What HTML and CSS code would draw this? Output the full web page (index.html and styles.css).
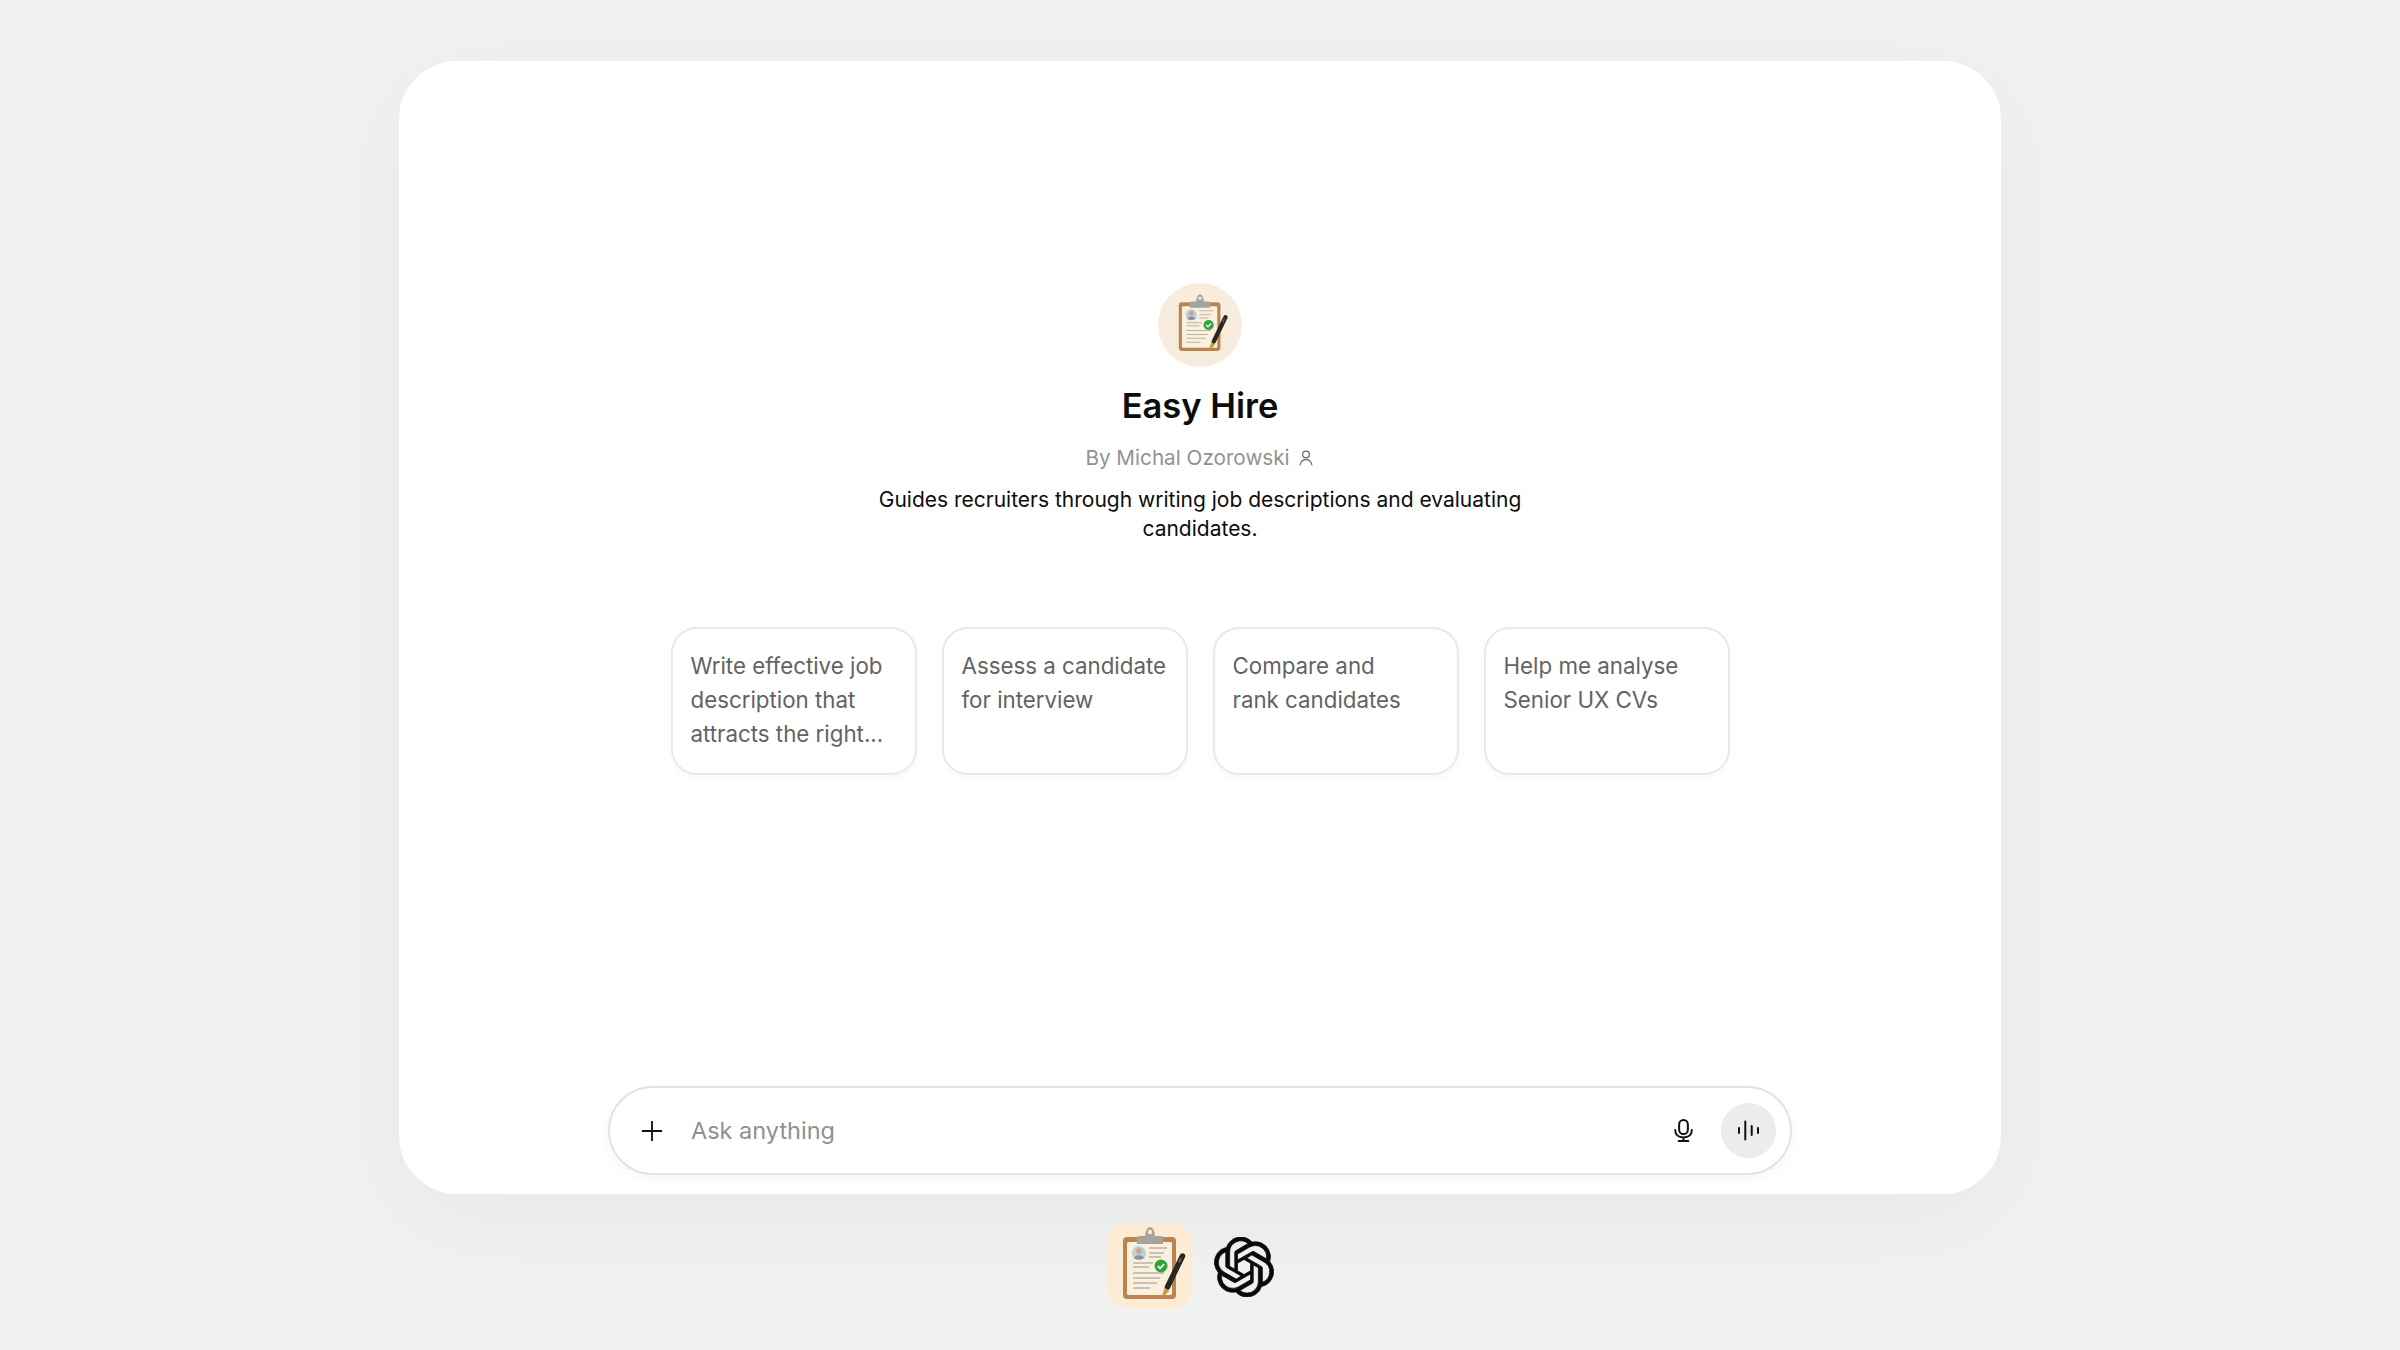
FILE: index.html
```html
<!DOCTYPE html>
<html lang="en">
<head>
    <meta charset="UTF-8">
    <title>Easy Hire</title>
    <link rel="stylesheet" href="styles.css">
</head>
<body>
<svg class="defs" width="0" height="0">
    <defs>
        <symbol id="clipboard" viewBox="0 0 84 84">
            <rect x="15" y="13" width="53" height="62" rx="4" fill="#bb8350"/>
            <rect x="19" y="18" width="45" height="53" rx="1.500" fill="#f9f0e0"/>
            <path d="M29 20v-6q0-2 2-2h6q1-9 5-9t5 9h6q2 0 2 2v6z" fill="#a8a297"/>
            <circle cx="42" cy="8" r="2.2" fill="#f3eadb"/>
            <circle cx="31" cy="29" r="7" fill="#b9d0d6"/>
            <circle cx="31" cy="27" r="2.8" fill="#cfa283"/>
            <path d="M25.5 34q5.500-6 11 0q-5.500 3.500-11 0z" fill="#8a9599"/>
            <path d="M41 24h18M41 29h15M41 33h12M25 39h20M25 43h16M25 49h31M25 54h27M25 59h24M25 64h17" stroke="#bcb3a2" stroke-width="1.300" fill="none"/>
            <circle cx="53" cy="42" r="6.500" fill="#35a33c"/>
            <path d="M49.800 42l2.300 2.300 4-4.300" stroke="#fff" stroke-width="1.600" fill="none"/>
            <path d="M74.500 32l-15 31" stroke="#2c2623" stroke-width="5.500" stroke-linecap="round"/>
            <path d="M57 65l-2.500 7.500 5.500-5.500z" fill="#c79a3f" stroke="#c79a3f" stroke-width="1.500"/>
            <path d="M71 38.500l2-4" stroke="#8c8278" stroke-width="1.200"/>
        </symbol>
    </defs>
</svg>

<main class="window">
    <section class="intro">
        <div class="avatar">
            <svg class="avatar-art" viewBox="0 0 84 84"><use href="#clipboard"/></svg>
        </div>
        <h1 class="title">Easy Hire</h1>
        <div class="byline">
            <span>By Michal Ozorowski</span>
            <svg class="byline-icon" viewBox="0 0 16 16" fill="none" stroke="#666" stroke-width="1.100" stroke-linecap="round">
                <circle cx="8" cy="4.800" r="3"/>
                <path d="M2.800 14c.6-3 2.500-4.500 5.200-4.500s4.600 1.500 5.200 4.500"/>
            </svg>
        </div>
        <p class="desc">Guides recruiters through writing job descriptions and evaluating candidates.</p>
    </section>

    <section class="starters">
        <div class="starter">Write effective job description that attracts the right...</div>
        <div class="starter">Assess a candidate for interview</div>
        <div class="starter">Compare and<br>rank candidates</div>
        <div class="starter">Help me analyse Senior UX CVs</div>
    </section>

    <div class="composer">
        <svg class="plus" viewBox="0 0 24 24" fill="none" stroke="#111" stroke-width="2">
            <path d="M12 1v22M1 12h22"/>
        </svg>
        <span class="placeholder">Ask anything</span>
        <svg class="mic" viewBox="0 0 24 28" fill="none" stroke="#111" stroke-width="2.300" stroke-linecap="round">
            <rect x="7" y="2" width="10" height="16" rx="5"/>
            <path d="M2.500 13.500c0 5.500 4 8.500 9.500 8.500s9.500-3 9.500-8.500M12 22v4M6.500 26h11"/>
        </svg>
        <div class="voice">
            <svg class="voice-bars" viewBox="0 0 21 21" fill="none" stroke="#111" stroke-width="2" stroke-linecap="round">
                <path d="M1 8v5M7.300 1.500v18M13.700 6v9M20 8v5"/>
            </svg>
        </div>
    </div>
</main>

<footer class="dock">
    <div class="tile">
        <svg class="tile-art" viewBox="0 0 84 84"><use href="#clipboard"/></svg>
    </div>
    <svg class="logo" viewBox="0 0 24 24" fill="#0a0a0a" stroke="#0a0a0a" stroke-width="0.300">
        <path d="M22.2819 9.8211a5.9847 5.9847 0 0 0-.5157-4.9108 6.0462 6.0462 0 0 0-6.5098-2.9A6.0651 6.0651 0 0 0 4.9807 4.1818a5.9847 5.9847 0 0 0-3.9977 2.9 6.0462 6.0462 0 0 0 .7427 7.0966 5.98 5.98 0 0 0 .511 4.9107 6.051 6.051 0 0 0 6.5146 2.9001A5.9847 5.9847 0 0 0 13.2599 24a6.0557 6.0557 0 0 0 5.7718-4.2058 5.9894 5.9894 0 0 0 3.9977-2.9001 6.0557 6.0557 0 0 0-.7475-7.0729zm-9.022 12.6081a4.4755 4.4755 0 0 1-2.8764-1.0408l.1419-.0804 4.7783-2.7582a.7948.7948 0 0 0 .3927-.6813v-6.7369l2.02 1.1686a.071.071 0 0 1 .038.052v5.5826a4.504 4.504 0 0 1-4.4945 4.4944zm-9.6607-4.1254a4.4708 4.4708 0 0 1-.5346-3.0137l.142.0852 4.783 2.7582a.7712.7712 0 0 0 .7806 0l5.8428-3.3685v2.3324a.0804.0804 0 0 1-.0332.0615L9.74 19.9502a4.4992 4.4992 0 0 1-6.1408-1.6464zM2.3408 7.8956a4.485 4.485 0 0 1 2.3655-1.9728V11.6a.7664.7664 0 0 0 .3879.6765l5.8144 3.3543-2.0201 1.1685a.0757.0757 0 0 1-.071 0l-4.8303-2.7865A4.504 4.504 0 0 1 2.3408 7.872zm16.5963 3.8558L13.1038 8.364 15.1192 7.2a.0757.0757 0 0 1 .071 0l4.8303 2.7913a4.4944 4.4944 0 0 1-.6765 8.1042v-5.6772a.79.79 0 0 0-.407-.667zm2.0107-3.0231l-.142-.0852-4.7735-2.7818a.7759.7759 0 0 0-.7854 0L9.409 9.2297V6.8974a.0662.0662 0 0 1 .0284-.0615l4.8303-2.7866a4.4992 4.4992 0 0 1 6.6802 4.66zM8.3065 12.863l-2.02-1.1638a.0804.0804 0 0 1-.038-.0567V6.0742a4.4992 4.4992 0 0 1 7.3757-3.4537l-.142.0805L8.704 5.459a.7948.7948 0 0 0-.3927.6813zm1.0976-2.3654l2.602-1.4998 2.6069 1.4998v2.9994l-2.5974 1.4997-2.6067-1.4997Z"/>
    </svg>
</footer>
</body>
</html>
```

FILE: styles.css
```css
* {
    box-sizing: border-box;
}

body {
    margin: 0;
    height: 1350px;
    padding-top: 61px;
    overflow: hidden;
    background-color: #f0f2f2;
    font-family: Inter, "Liberation Sans", sans-serif;
    display: flex;
    flex-direction: column;
    align-items: center;
}

.defs {
    position: absolute;
}

.window {
    width: 1602px;
    height: 1133px;
    flex: none;
    background-color: #fff;
    border-radius: 58px;
    box-shadow: 0 24px 100px rgba(0,0,0,0.045);
    padding: 222px 0 19px;
    display: flex;
    flex-direction: column;
    align-items: center;
}

.intro {
    display: flex;
    flex-direction: column;
    align-items: center;
}

.avatar {
    width: 84px;
    height: 84px;
    border-radius: 50%;
    background-color: #f8eddc;
    display: flex;
    align-items: center;
    justify-content: center;
}

.avatar-art {
    width: 66px;
    height: 66px;
}

.title {
    margin: 17px 0 0;
    font-size: 34.500px;
    line-height: 44px;
    font-weight: 600;
    color: #0d0d0d;
}

.byline {
    margin-top: 15px;
    display: flex;
    align-items: center;
    gap: 7px;
    font-size: 20.700px;
    line-height: 29px;
    color: #929292;
}

.byline-icon {
    width: 18px;
    height: 18px;
}

.desc {
    margin: 13px 0 0;
    width: 660px;
    font-size: 21px;
    line-height: 29px;
    text-align: center;
    color: #0d0d0d;
}

.starters {
    margin-top: 84px;
    display: flex;
    gap: 25px;
}

.starter {
    width: 246px;
    height: 148px;
    padding: 20px 18px 20px 18px;
    border: 2px solid #e9e9e9;
    border-radius: 26px;
    box-shadow: 0 3px 8px rgba(0,0,0,0.03);
    font-size: 22.300px;
    line-height: 34px;
    color: #636363;
}

.composer {
    margin-top: auto;
    width: 1184px;
    height: 89px;
    padding: 0 14px 0 31px;
    border: 2px solid #e2e2e2;
    border-radius: 45px;
    box-shadow: 0 4px 12px rgba(0,0,0,0.04);
    display: flex;
    align-items: center;
}

.plus {
    width: 22px;
    height: 22px;
    flex: none;
}

.placeholder {
    margin-left: 28px;
    flex: 1;
    font-size: 23.500px;
    color: #8f8f8f;
}

.mic {
    width: 21px;
    height: 25px;
    flex: none;
    margin-right: 27px;
}

.voice {
    width: 55px;
    height: 55px;
    flex: none;
    border-radius: 50%;
    background-color: #ececec;
    display: flex;
    align-items: center;
    justify-content: center;
}

.voice-bars {
    width: 21px;
    height: 21px;
}

.dock {
    margin-top: 30px;
    padding-right: 18px;
    display: flex;
    align-items: center;
    gap: 22px;
}

.tile {
    width: 84px;
    height: 84px;
    border-radius: 20px;
    background-color: #fcecd6;
    box-shadow: 0 0 6px #fcecd6;
}

.tile-art {
    display: block;
    width: 84px;
    height: 84px;
}

.logo {
    width: 60px;
    height: 60px;
    margin-top: 2px;
}
```
